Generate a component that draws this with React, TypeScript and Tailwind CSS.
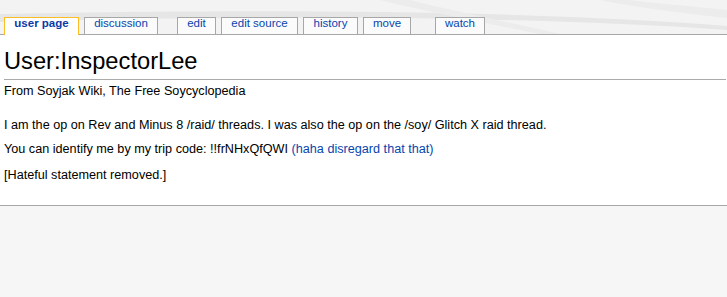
import React from 'react'

const tabs = [
  { label: 'user page', w: 'w-[75px]', active: true },
  { label: 'discussion', w: 'w-[74px]', ml: 'ml-[5px]' },
  { label: 'edit', w: 'w-[39px]', ml: 'ml-[19px]' },
  { label: 'edit source', w: 'w-[77px]', ml: 'ml-[5px]' },
  { label: 'history', w: 'w-[55px]', ml: 'ml-[5px]' },
  { label: 'move', w: 'w-[48px]', ml: 'ml-[5px]' },
  { label: 'watch', w: 'w-[50px]', ml: 'ml-[24px]' },
]

export default function App() {
  return (
    <div className="relative w-[727px] h-[297px] bg-[#f6f6f6] overflow-hidden font-['Liberation_Sans',Arial,sans-serif] text-black">
      {/* header swooshes */}
      <svg className="absolute inset-0 pointer-events-none" width="727" height="34" viewBox="0 0 727 34">
        <rect width="727" height="34" fill="#f3f3f3" />
        <path d="M0 14 C 200 10, 500 8, 727 26 L 727 30 C 500 14, 200 16, 0 22 Z" fill="#e6e6e6" />
        <path d="M380 0 C 420 10, 470 20, 540 34 L 560 34 C 490 18, 440 8, 410 0 Z" fill="#ececec" />
        <path d="M600 0 C 640 8, 690 14, 727 18 L 727 10 C 690 6, 650 3, 630 0 Z" fill="#ececec" />
      </svg>

      {/* tabs */}
      <div className="relative z-10 flex items-end h-[34px] pl-[4px]">
        {tabs.map((t) => (
          <div
            key={t.label}
            className={`${t.w} ${t.ml ?? ''} flex items-center justify-center text-[11.5px] leading-none border-x border-t ${
              t.active
                ? 'border-[#fabd23] bg-white font-bold text-[#0b3aa8] h-[18px] -mb-px'
                : 'border-[#a7a7a7] bg-[#fbfbfb] text-[#0645ad] h-[17px]'
            }`}
          >
            <span className={t.active ? 'pb-[5px]' : 'pb-[4px]'}>{t.label}</span>
          </div>
        ))}
      </div>

      {/* content */}
      <div className="relative bg-white border-y border-[#a7a7a7] h-[172px] pl-[4px] pr-[1px]">
        <h1 className="pt-[12px] text-[23.7px] leading-[28px] font-normal border-b border-[#aaaaaa] pb-[4px]">
          User:InspectorLee
        </h1>
        <div className="text-[12.65px] leading-[16px] mt-[3px]">From Soyjak Wiki, The Free Soycyclopedia</div>
        <div className="text-[12.65px] leading-[16px] mt-[18px] flex flex-col gap-[8px]">
          <p>I am the op on Rev and Minus 8 /raid/ threads. I was also the op on the /soy/ Glitch X raid thread.</p>
          <p>
            You can identify me by my trip code: !!frNHxQfQWI{' '}
            <span className="text-[#0645ad]">(haha disregard that that)</span>
          </p>
          <p className="mt-[2px]">[Hateful statement removed.]</p>
        </div>
      </div>
    </div>
  )
}
